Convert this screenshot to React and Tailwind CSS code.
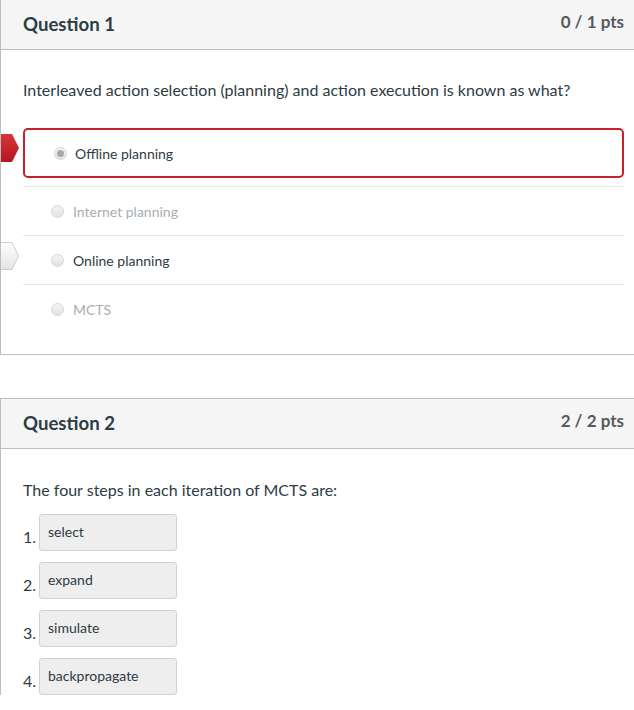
import React from 'react';

const answers = [
  { label: 'Offline planning', state: 'wrong' },
  { label: 'Internet planning', state: 'muted' },
  { label: 'Online planning', state: 'correct' },
  { label: 'MCTS', state: 'muted' },
];

const steps = ['select', 'expand', 'simulate', 'backpropagate'];

function Radio({ checked }) {
  return (
    <span className="relative inline-flex h-[13px] w-[13px] shrink-0 items-center justify-center rounded-full border border-[#d6d6d6] bg-gradient-to-b from-[#f4f4f4] to-[#e2e2e2]">
      {checked && <span className="h-[7px] w-[7px] rounded-full bg-[#a8a8a8]" />}
    </span>
  );
}

function RedArrow() {
  return (
    <svg className="absolute left-0 top-[5px]" width="19" height="30" viewBox="0 0 19 30">
      <defs>
        <linearGradient id="red" x1="0" y1="0" x2="0" y2="1">
          <stop offset="0" stopColor="#d8353a" />
          <stop offset="1" stopColor="#b4171d" />
        </linearGradient>
      </defs>
      <path d="M0 1 H11 L18 15 L11 29 H0 Z" fill="url(#red)" />
    </svg>
  );
}

function WhiteArrow() {
  return (
    <svg className="absolute left-0 top-[5px]" width="19" height="30" viewBox="0 0 19 30">
      <defs>
        <linearGradient id="white" x1="0" y1="0" x2="0" y2="1">
          <stop offset="0" stopColor="#ffffff" />
          <stop offset="1" stopColor="#e4e4e4" />
        </linearGradient>
      </defs>
      <path d="M-1 1.5 H11 L17.5 15 L11 28.5 H-1 Z" fill="url(#white)" stroke="#cfcfcf" strokeWidth="1" />
    </svg>
  );
}

function Header({ title, pts }) {
  return (
    <div className="flex h-[50px] items-center justify-between border-b border-[#b9bec2] bg-[#f5f5f5] pl-[22px] pr-[10px]">
      <h2 className="text-[18.6px] font-bold text-[#2d3b45]">{title}</h2>
      <span className="-mt-[5px] text-[17px] font-bold text-[#555a5e]">{pts}</span>
    </div>
  );
}

export default function App() {
  return (
    <div className="h-[710px] w-[634px] overflow-hidden bg-white font-['Lato',sans-serif] text-[#2d3b45]">
      {/* Question 1 */}
      <div className="relative border-b border-l border-[#b9bec2]">
        <Header title="Question 1" pts="0 / 1 pts" />
        <p className="pl-[22px] pt-[28px] text-[16px] leading-[24px]">
          Interleaved action selection (planning) and action execution is known as what?
        </p>
        <div className="mt-[26px] pb-[20px]">
          {answers.map((a, i) => {
            if (a.state === 'wrong') {
              return (
                <div key={i} className="relative">
                  <RedArrow />
                  <div className="ml-[22px] mr-[10px] border-b border-[#e6e6e6] pb-[8px]">
                    <div className="flex h-[50px] items-center gap-[8px] rounded-[5px] border-2 border-[#c6202a] pl-[29px] text-[14px]">
                      <Radio checked />
                      <span>{a.label}</span>
                    </div>
                  </div>
                </div>
              );
            }
            return (
              <div key={i} className="relative">
                {a.state === 'correct' && <WhiteArrow />}
                <div
                  className={`ml-[22px] mr-[10px] flex h-[49px] items-center gap-[9px] pl-[28px] text-[14px] ${
                    i < answers.length - 1 ? 'border-b border-[#e6e6e6]' : ''
                  } ${a.state === 'muted' ? 'text-[#a7aeb3]' : 'text-[#2d3b45]'}`}
                >
                  <Radio />
                  <span>{a.label}</span>
                </div>
              </div>
            );
          })}
        </div>
      </div>

      {/* Question 2 */}
      <div className="mt-[43px] border-l border-t border-[#b9bec2]">
        <Header title="Question 2" pts="2 / 2 pts" />
        <p className="pl-[22px] pt-[29px] text-[16px] leading-[24px]">
          The four steps in each iteration of MCTS are:
        </p>
        <ol className="mt-[12px] flex flex-col gap-[11px] pl-[22px]">
          {steps.map((s, i) => (
            <li key={s} className="flex items-start">
              <span className="mt-[11px] w-[16px] text-[16px] leading-[24px] text-[#2d3b45]">{i + 1}.</span>
              <div className="h-[37px] w-[138px] rounded-[3px] border border-[#cfd2d4] bg-[#eeeeee] pl-[8px] pt-[7px] text-[14px] leading-[20px] text-[#2d3b45]">
                {s}
              </div>
            </li>
          ))}
        </ol>
      </div>
    </div>
  );
}
